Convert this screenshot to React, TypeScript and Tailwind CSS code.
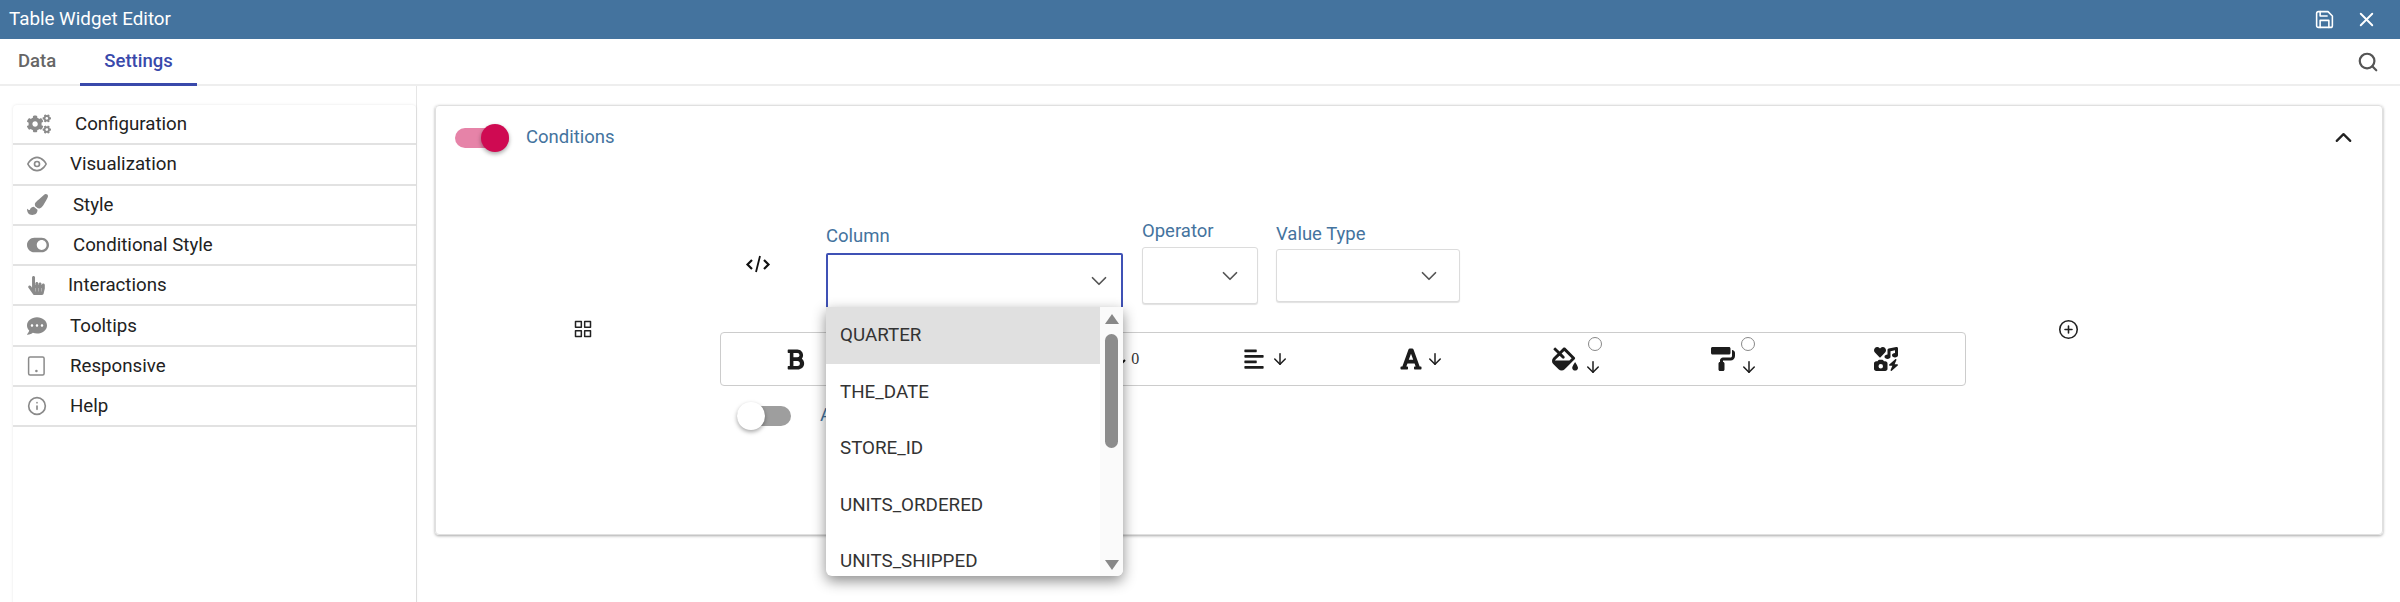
import React from "react";
import { FaCogs, FaPaintBrush, FaToggleOn, FaHandPointer, FaCommentDots, FaBold, FaAlignLeft, FaFont, FaFillDrip, FaPaintRoller } from "react-icons/fa";
import { FaIcons } from "react-icons/fa6";
import { FiEye, FiInfo, FiChevronDown, FiChevronUp, FiSearch, FiX, FiArrowDown, FiSave, FiGrid, FiPlusCircle } from "react-icons/fi";

function Tablet() {
  return (
    <svg width="19" height="20" viewBox="0 0 19 20" fill="none">
      <rect x="1.6" y="1" width="15.5" height="18" rx="1.5" stroke="currentColor" strokeWidth="1.5" />
      <circle cx="9.4" cy="15" r="1.3" fill="currentColor" />
    </svg>
  );
}

function CodeIcon() {
  return (
    <svg width="26" height="24" viewBox="0 0 26 24" fill="none" stroke="currentColor" strokeWidth="2.2">
      <path d="M7 8 L2.5 12.5 L7 17" />
      <path d="M19 8 L23.5 12.5 L19 17" />
      <path d="M15 4 L11 20" strokeWidth="1.8" />
    </svg>
  );
}

const menu: [React.ReactNode, string, string][] = [
  [<FaCogs size={24} />, "Configuration", "ml-[24px]"],
  [<FiEye size={20} />, "Visualization", "ml-[19px]"],
  [<FaPaintBrush size={21} />, "Style", "ml-[22px]"],
  [<FaToggleOn size={22} />, "Conditional Style", "ml-[22px]"],
  [<FaHandPointer size={19} />, "Interactions", "ml-[17px]"],
  [<FaCommentDots size={20} />, "Tooltips", "ml-[19px]"],
  [<Tablet />, "Responsive", "ml-[19px]"],
  [<FiInfo size={20} />, "Help", "ml-[19px]"],
];

const items = ["QUARTER", "THE_DATE", "STORE_ID", "UNITS_ORDERED", "UNITS_SHIPPED"];

function Select({ w, h, chevronRight }: { w: string; h: string; chevronRight: string }) {
  return (
    <div className={`${w} ${h} flex items-center justify-end ${chevronRight} bg-white border border-[#dcdcdc] rounded-[3px] shadow-[0_1px_1px_rgba(0,0,0,0.12)] text-[#555]`}>
      <FiChevronDown size={26} strokeWidth={1.6} />
    </div>
  );
}

function Down({ className = "" }: { className?: string }) {
  return <FiArrowDown size={18} strokeWidth={2} className={className} />;
}

export default function App() {
  return (
    <div className="w-full h-[602px] flex flex-col bg-white overflow-hidden font-['Roboto',sans-serif]">
      <header className="h-[39px] shrink-0 bg-[#44739e] flex items-center pl-[9px] pr-[22px] text-white">
        <span className="text-[18.8px] leading-none">Table Widget Editor</span>
        <FiSave size={21} className="ml-auto" strokeWidth={1.8} />
        <FiX size={23} className="ml-[20px]" strokeWidth={2} />
      </header>

      <nav className="h-[47px] shrink-0 flex items-stretch border-b-2 border-[#eeeeee] pr-[21px]">
        <div className="w-[80px] flex items-center pl-[18px] pt-[1px] text-[#666] text-[18.5px] font-medium">Data</div>
        <div className="w-[117px] flex items-center justify-center pt-[2px] text-[#3949ab] text-[18.5px] font-medium border-b-[3px] border-[#3949ab] -mb-[2px]">Settings</div>
        <FiSearch size={22} className="ml-auto self-center text-[#555]" strokeWidth={2.4} />
      </nav>

      <main className="flex-1 flex min-h-0">
        <aside className="w-[417px] shrink-0 pl-[13px] pt-[19px] border-r border-[#e6e6e6]">
          <div className="rounded-t-[4px] shadow-[0_0_3px_rgba(0,0,0,0.1)] h-[600px]">
            {menu.map(([icon, label, ml]) => (
              <div key={label} className="h-[40.3px] flex items-center pl-[14px] border-b-2 border-[#e2e2e2] text-[#222] text-[18.7px]">
                <span className="w-[24px] shrink-0 flex justify-start text-[#8a8a8a]">{icon}</span>
                <span className={ml}>{label}</span>
              </div>
            ))}
          </div>
        </aside>

        <section className="flex-1 min-w-0 pl-[18px] pr-[17px] pt-[19px]">
          <div className="h-[430px] border border-[#e0e0e0] rounded-[4px] shadow-[0_1px_3px_rgba(0,0,0,0.35)]">
            <div className="h-[63px] flex items-center pl-[19px] pr-[25px]">
              <div className="relative w-[54px] h-[20px] rounded-full bg-[#e683a8]">
                <div className="absolute right-0 top-[-4px] w-[28px] h-[28px] rounded-full bg-[#cf0a52] shadow-[0_2px_4px_rgba(0,0,0,0.35)]" />
              </div>
              <span className="ml-[17px] text-[18.5px] text-[#44739e]">Conditions</span>
              <FiChevronUp size={27} strokeWidth={2} className="ml-auto text-[#222]" />
            </div>

            <div className="flex items-start">
              <FiGrid size={20} strokeWidth={1.8} className="ml-[137px] mt-[150px] text-[#222]" />
              <div className="ml-[127px] w-[1246px] pt-[50px]">
                <div className="h-[113px] flex items-start">
                  <span className="ml-[25px] mt-[33px] text-[#111]"><CodeIcon /></span>
                  <div className="relative ml-[55px] w-[297px]">
                    <div className="h-[34px] pt-[6px] text-[18.5px] leading-[22px] text-[#44739e]">Column</div>
                    <div className="h-[56px] flex items-center justify-end pr-[9px] border-2 border-[#3f51b5] rounded-[2px] text-[#555]">
                      <FiChevronDown size={26} strokeWidth={1.6} />
                    </div>
                    <div className="absolute left-0 top-[88px] w-[297px] h-[269px] flex overflow-hidden rounded-b-[6px] bg-white shadow-[0_5px_14px_rgba(0,0,0,0.45)] z-10">
                      <div className="flex-1">
                        {items.map((t, i) => (
                          <div key={t} className={`h-[56.5px] flex items-center pl-[14px] text-[18.8px] text-[#333] ${i === 0 ? "bg-[#e0e0e0]" : ""}`}>{t}</div>
                        ))}
                      </div>
                      <div className="w-[23px] bg-[#fafafa] flex flex-col items-center pt-[7px]">
                        <div className="w-0 h-0 border-x-[7px] border-x-transparent border-b-[10px] border-b-[#888]" />
                        <div className="w-[13px] h-[114px] mt-[10px] rounded-full bg-[#8c8c8c]" />
                        <div className="w-0 h-0 mt-auto mb-[6px] border-x-[7px] border-x-transparent border-t-[10px] border-t-[#888]" />
                      </div>
                    </div>
                  </div>
                  <div className="ml-[19px] -mt-[2px] w-[116px]">
                    <div className="h-[30px] pt-[2px] text-[18.5px] leading-[24px] text-[#44739e]">Operator</div>
                    <Select w="w-[116px]" h="h-[57px]" chevronRight="pr-[14px]" />
                  </div>
                  <div className="ml-[18px] mt-[1px] w-[184px]">
                    <div className="h-[29px] pt-[2px] text-[18.5px] leading-[24px] text-[#44739e]">Value Type</div>
                    <Select w="w-[184px]" h="h-[53px]" chevronRight="pr-[17px]" />
                  </div>
                </div>

                <div className="h-[54px] grid grid-cols-8 border border-[#cccccc] rounded-[4px] text-[#1c1c1c]">
                  <div className="flex items-center justify-center pr-[6px]"><FaBold size={23} /></div>
                  <div />
                  <div className="flex items-center justify-center pl-[40px] gap-[5px] font-['Liberation_Serif',serif] text-[16px] text-[#333]">
                    <svg width="6" height="6" viewBox="0 0 6 6" className="mt-[5px]"><path d="M1 5 L5 1" stroke="#111" strokeWidth="2" /></svg>
                    <span>0</span>
                  </div>
                  <div className="flex items-center justify-center gap-[6px] pl-[1px]"><FaAlignLeft size={22} /><Down /></div>
                  <div className="flex items-center justify-center gap-[3px] pl-[2px]"><FaFont size={24} /><Down /></div>
                  <div className="relative flex items-center justify-center gap-[6px] pl-[2px]">
                    <FaFillDrip size={26} /><Down className="mt-[15px]" />
                    <span className="absolute left-[89px] top-[4px] w-[14px] h-[14px] rounded-full border border-[#888] bg-white" />
                  </div>
                  <div className="relative flex items-center justify-center gap-[5px] pl-[6px]">
                    <FaPaintRoller size={24} /><Down className="mt-[15px]" />
                    <span className="absolute left-[87px] top-[4px] w-[14px] h-[14px] rounded-full border border-[#888] bg-white" />
                  </div>
                  <div className="flex items-center justify-center pr-[2px]"><FaIcons size={24} /></div>
                </div>

                <div className="mt-[16px] ml-[17px] flex items-center">
                  <div className="relative w-[54px] h-[20px] rounded-full bg-[#9e9e9e]">
                    <div className="absolute left-0 top-[-4px] w-[28px] h-[28px] rounded-full bg-white shadow-[0_2px_4px_rgba(0,0,0,0.35)]" />
                  </div>
                  <span className="ml-[29px] text-[18.5px] text-[#44739e]">A</span>
                </div>
              </div>
              <FiPlusCircle size={21} strokeWidth={1.8} className="ml-[92px] mt-[150px] text-[#222]" />
            </div>
          </div>
        </section>
      </main>
    </div>
  );
}
